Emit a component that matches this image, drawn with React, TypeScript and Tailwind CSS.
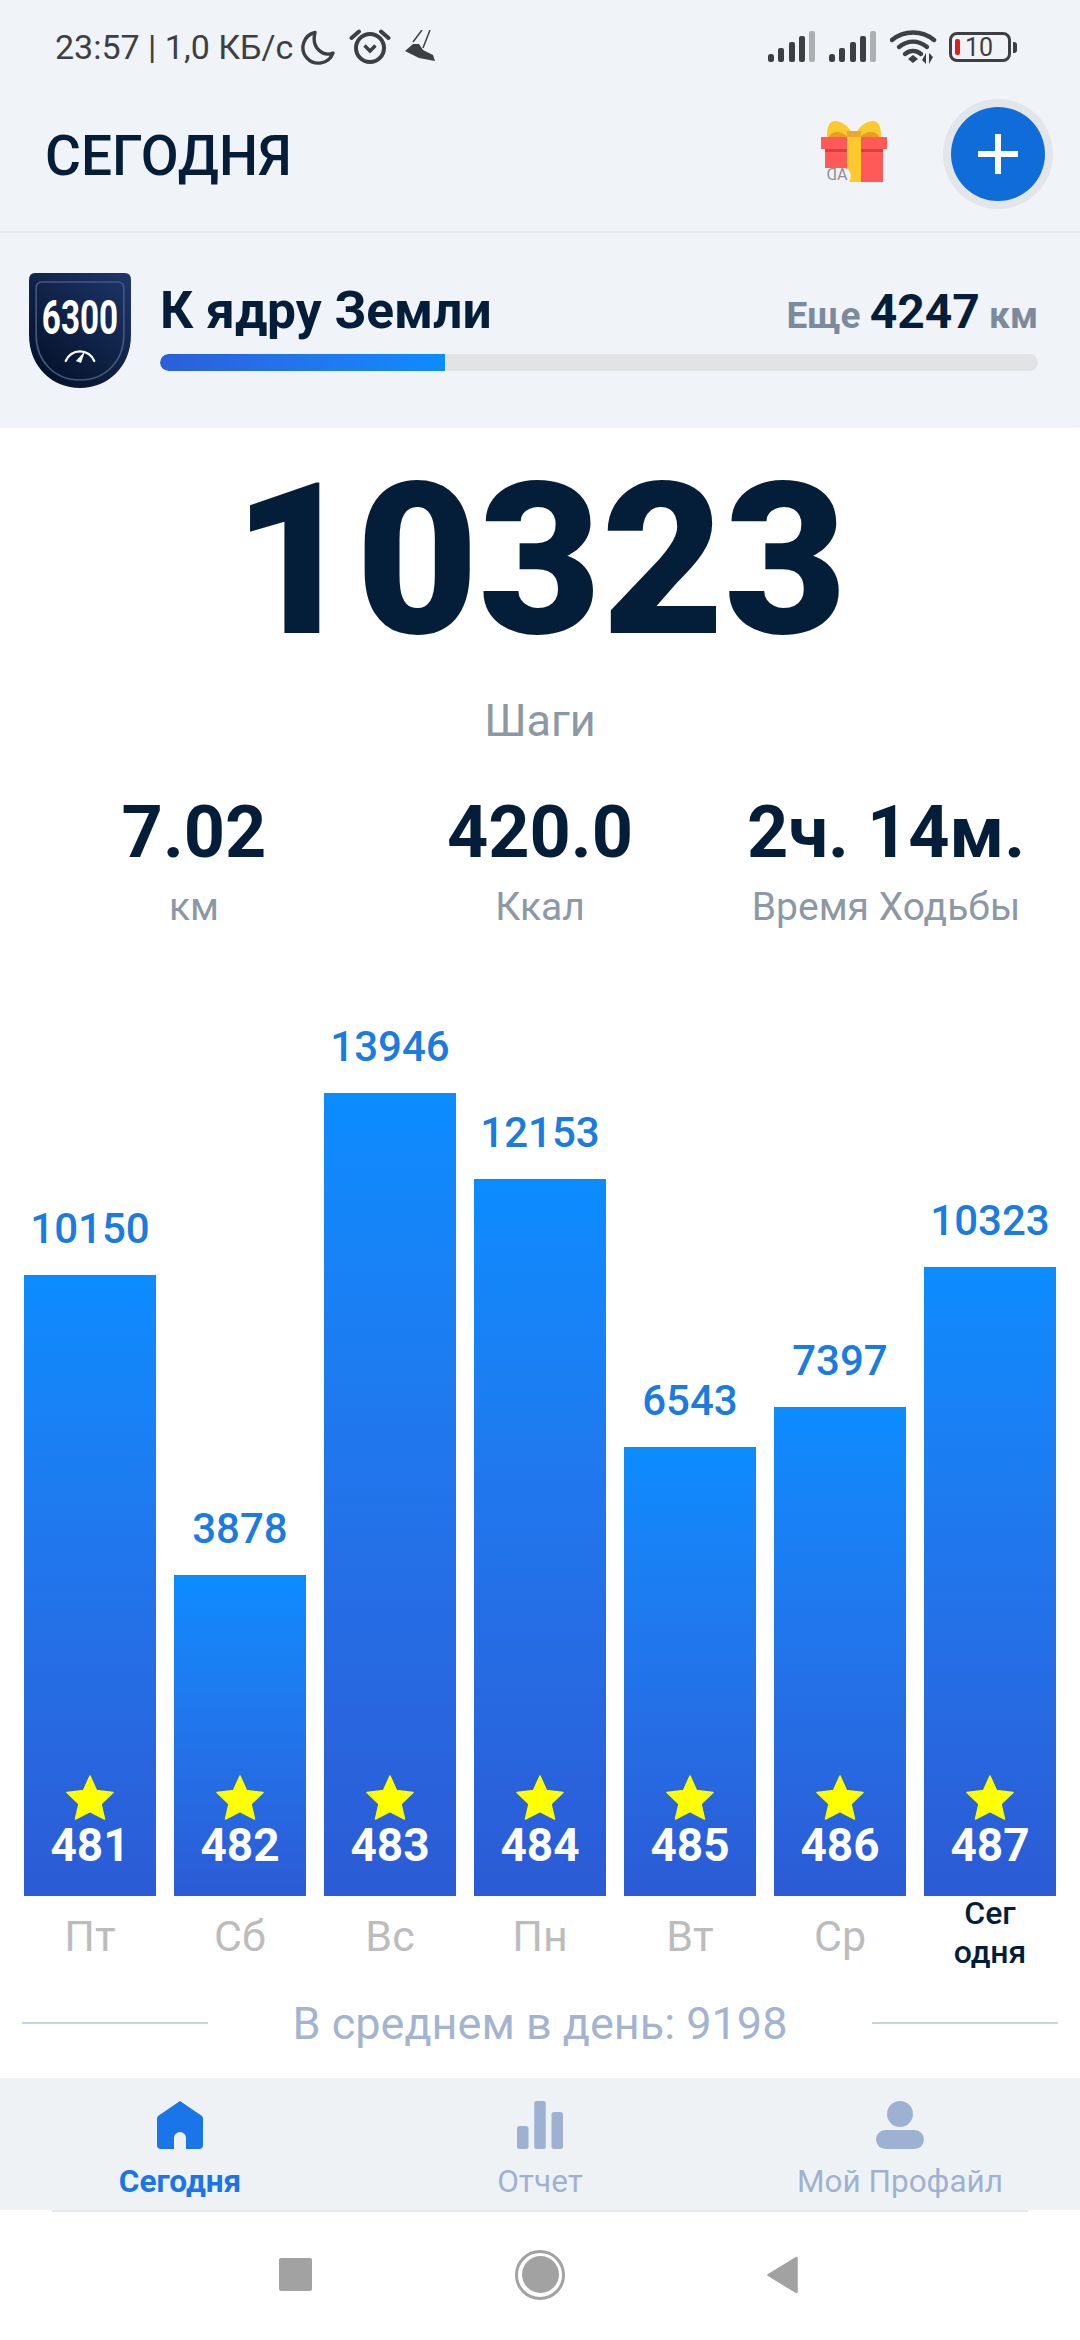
import type { JSX } from "react";

interface DayBar {
  steps: number;
  height: number;
  star: number;
  day: string;
}

const bars: DayBar[] = [
  { steps: 10150, height: 621, star: 481, day: "Пт" },
  { steps: 3878, height: 321, star: 482, day: "Сб" },
  { steps: 13946, height: 803, star: 483, day: "Вс" },
  { steps: 12153, height: 717, star: 484, day: "Пн" },
  { steps: 6543, height: 449, star: 485, day: "Вт" },
  { steps: 7397, height: 489, star: 486, day: "Ср" },
  { steps: 10323, height: 629, star: 487, day: "Сегодня" },
];

function StatusBar(): JSX.Element {
  return (
    <div className="h-[96px] flex items-center justify-between pl-[55px] pr-[63px] pb-[2px]">
      <div className="flex items-center text-[#3d3f42]">
        <span className="text-[34px] leading-none">23:57 | 1,0 КБ/с</span>
        <svg width="36" height="36" viewBox="0 0 36 36" className="ml-[7px]">
          <path d="M15 3.5 A15.5 15.5 0 1 0 33 24 C23 28 11 19 15 3.5Z" fill="none" stroke="#3d3f42" strokeWidth="3.4" strokeLinejoin="round" />
        </svg>
        <svg width="42" height="40" viewBox="0 0 42 40" className="ml-[13px]">
          <circle cx="21" cy="21" r="14" fill="none" stroke="#3d3f42" strokeWidth="4" />
          <path d="M15.5 18.5 L21 24 L26.5 18.5" fill="none" stroke="#3d3f42" strokeWidth="3.4" />
          <path d="M2.5 11 L10 4.5 M39.5 11 L32 4.5" stroke="#3d3f42" strokeWidth="4" strokeLinecap="round" />
        </svg>
        <svg width="32" height="34" viewBox="0 0 32 34" className="ml-[14px]">
          <path d="M0 21 L8 14 L14 14 L18 20 L28 25 L30 31 L14 28Z" fill="#3d3f42" />
          <path d="M8 12 L17 0 M18 18 L25 0" stroke="#3d3f42" strokeWidth="1.5" fill="none" />
        </svg>
      </div>
      <div className="flex items-center">
        <SignalIcon />
        <SignalIcon className="ml-[13px]" />
        <svg width="48" height="36" viewBox="0 0 48 36" className="ml-[13px]">
          <path d="M2 11 C14 1 32 1 44 11" fill="none" stroke="#3d3f42" strokeWidth="4.4" strokeLinecap="round" />
          <path d="M9 18 C18 11 28 11 37 18" fill="none" stroke="#3d3f42" strokeWidth="4.4" strokeLinecap="round" />
          <path d="M15 25 C20 21 26 21 31 25" fill="none" stroke="#3d3f42" strokeWidth="4.4" strokeLinecap="round" />
          <path d="M18 30 L23 26 L28 30 L23 34Z" fill="#3d3f42" />
          <path d="M36 24 L36 35 L32 31Z M39 24 L39 35 L43 28Z" fill="#3d3f42" />
        </svg>
        <div className="ml-[11px] w-[62px] h-[30px] border-[3.5px] border-[#3d3f42] rounded-[8px] flex items-center pl-[3px]">
          <div className="w-[5px] h-[16px] rounded-[2px] bg-[#d9201c]" />
          <span className="ml-[5px] text-[25px] leading-none text-[#3d3f42]">10</span>
        </div>
        <div className="ml-[2px] w-[4px] h-[11px] rounded-r-[3px] bg-[#3d3f42]" />
      </div>
    </div>
  );
}

function SignalIcon({ className = "" }: { className?: string }): JSX.Element {
  return (
    <svg width="48" height="32" viewBox="0 0 48 32" className={className}>
      <rect x="0" y="23" width="6" height="8" rx="2.5" fill="#3d3f42" />
      <rect x="10" y="17" width="6" height="14" rx="2" fill="#3d3f42" />
      <rect x="21" y="11" width="6" height="20" rx="2" fill="#3d3f42" />
      <rect x="31" y="5" width="6" height="26" rx="2" fill="#3d3f42" />
      <rect x="41" y="0" width="6" height="31" rx="2" fill="#adafb1" />
    </svg>
  );
}

function GiftIcon(): JSX.Element {
  return (
    <svg width="68" height="70" viewBox="0 0 68 70">
      <path d="M33 16 C26 2 14 -2 9 3 C6 8 6 12 6 18 L60 18 C60 12 60 8 57 3 C52 -2 40 2 33 16Z" fill="#fdc92f" />
      <path d="M8 17 C10 11 20 10 27 17Z M58 17 C56 11 46 10 39 17Z" fill="#e89b26" />
      <rect x="26" y="11" width="14" height="7" fill="#e8a92f" />
      <rect x="0" y="17" width="66" height="12" fill="#ff5a58" />
      <rect x="4" y="29" width="58" height="33" fill="#ff5a58" />
      <rect x="4" y="29" width="58" height="3" fill="#d93f40" />
      <rect x="26" y="17" width="14" height="45" fill="#fdc92f" />
      <path d="M4 62 L4 48 L22 48 C29 48 32 55 28 62Z" fill="#f0f3f8" />
      <text x="16" y="60" textAnchor="middle" transform="matrix(-1 0 0 1 32 0)" fontFamily="Roboto, sans-serif" fontSize="16" fill="#8e9095">AD</text>
    </svg>
  );
}

function HeaderRow(): JSX.Element {
  return (
    <div className="h-[137px] flex items-center pl-[45px] pr-[27px] pb-[20px] border-b-[2px] border-[#e7e9ed]">
      <h1 className="mt-[6px] text-[55px] font-medium leading-none text-[#041e3a]">СЕГОДНЯ</h1>
      <div className="ml-auto mr-[54px] mt-[2px]">
        <GiftIcon />
      </div>
      <div className="w-[110px] h-[110px] rounded-full bg-[#e3e5e9] flex items-center justify-center">
        <div className="w-[94px] h-[94px] rounded-full bg-[#0f6cd8] flex items-center justify-center">
          <svg width="40" height="40" viewBox="0 0 40 40">
            <path d="M20 0 V40 M0 20 H40" stroke="#fff" strokeWidth="6" />
          </svg>
        </div>
      </div>
    </div>
  );
}

function ShieldBadge(): JSX.Element {
  return (
    <svg width="104" height="116" viewBox="0 0 102 116" preserveAspectRatio="none" className="shrink-0">
      <defs>
        <linearGradient id="shieldFill" x1="0.9" y1="0" x2="0.1" y2="1">
          <stop offset="0" stopColor="#1c3468" />
          <stop offset="1" stopColor="#020f24" />
        </linearGradient>
      </defs>
      <path d="M7 0 H95 Q101 0 101 7 V62 C101 94 78 115 51 115 C24 115 1 94 1 62 V7 Q1 0 7 0Z" fill="url(#shieldFill)" />
      <path d="M14 9 H88 Q94 9 94 15 V62 C94 88 76 107 51 107 C26 107 8 88 8 62 V15 Q8 9 14 9Z" fill="none" stroke="#46577c" strokeWidth="1.6" />
      <text transform="translate(51 61) scale(0.68 1)" textAnchor="middle" fontFamily="Roboto, sans-serif" fontWeight="700" fontSize="48" fill="#fff">6300</text>
      <path d="M37 88 A15 15 0 0 1 65 88" fill="none" stroke="#fff" strokeWidth="2.2" strokeLinecap="round" />
      <path d="M47 88 L56 78 L52 90Z" fill="#fff" />
    </svg>
  );
}

function GoalBanner(): JSX.Element {
  return (
    <div className="h-[195px] flex items-start pl-[28px] pr-[42px] pt-[40px] text-[#041e3a]">
      <ShieldBadge />
      <div className="ml-[28px] flex-1 pt-[8px]">
        <div className="flex items-baseline justify-between h-[59px]">
          <span className="text-[51.5px] font-bold leading-[59px]">К ядру Земли</span>
          <span className="text-[37px] font-bold leading-[59px] text-[#7b8a9c]">
            Еще <span className="text-[48px] text-[#041e3a]">4247</span> км
          </span>
        </div>
        <div className="mt-[14px] h-[17px] rounded-full bg-[#e1e3e5] overflow-hidden">
          <div className="h-full w-[285px] rounded-l-full bg-gradient-to-r from-[#2b5fd9] to-[#0a8cff]" />
        </div>
      </div>
    </div>
  );
}

function Stat({ value, label }: { value: string; label: string }): JSX.Element {
  return (
    <div className="flex flex-col items-center w-[346px]">
      <span className="text-[72px] font-bold leading-[80px] text-[#041e3a] whitespace-nowrap">{value}</span>
      <span className="mt-[13px] text-[39px] leading-[42px] text-[#8b98a6] whitespace-nowrap">{label}</span>
    </div>
  );
}

function ChartColumn({ bar }: { bar: DayBar }): JSX.Element {
  return (
    <div className="w-[132px] flex flex-col items-center">
      <span className="text-[42px] font-medium leading-[48px] mb-[22px] text-[#1a7be0]">{bar.steps}</span>
      <div
        className="w-full flex flex-col items-center justify-end pb-[29px] bg-gradient-to-b from-[#0a8cff] to-[#2b5bd5]"
        style={{ height: bar.height }}
      >
        <svg width="48" height="45" viewBox="0 0 48 45">
          <path
            d="M24 1 L30.5 15.5 L47 17.5 L35 29 L38.5 44 L24 36.5 L9.5 44 L13 29 L1 17.5 L17.5 15.5Z"
            fill="#ffff00"
            stroke="#ffff00"
            strokeWidth="1.5"
            strokeLinejoin="round"
          />
        </svg>
        <span className="mt-[3px] text-[46px] font-bold leading-[44px] text-white">{bar.star}</span>
      </div>
    </div>
  );
}

function DayLabel({ day }: { day: string }): JSX.Element {
  if (day === "Сегодня") {
    return (
      <div className="w-[132px] -mt-[2px] text-center text-[32px] font-medium leading-[39px] text-[#041e3a]">
        <div>Сег</div>
        <div>одня</div>
      </div>
    );
  }
  return (
    <div className="w-[132px] h-[80px] pt-[18px] text-center text-[43px] leading-[44px] text-[#bcbcbc]">{day}</div>
  );
}

function NavItem({
  icon,
  label,
  active,
}: {
  icon: JSX.Element;
  label: string;
  active?: boolean;
}): JSX.Element {
  return (
    <div className="w-[360px] flex flex-col items-center pt-[23px]">
      <div className="h-[48px] flex items-end">{icon}</div>
      <span
        className={
          active
            ? "mt-[14px] text-[31.5px] font-bold leading-[38px] text-[#1a76e8]"
            : "mt-[14px] text-[31.5px] leading-[38px] text-[#9db2d3]"
        }
      >
        {label}
      </span>
    </div>
  );
}

export default function App(): JSX.Element {
  return (
    <div className="w-[1080px] h-[2340px] overflow-hidden flex flex-col bg-white font-['Roboto',sans-serif]">
      <div className="bg-[#f0f3f8]">
        <StatusBar />
        <HeaderRow />
        <GoalBanner />
      </div>

      <main className="flex-1 flex flex-col">
        <div className="h-[266px] flex items-center justify-center text-[212px] font-black leading-none text-[#041e3a]">
          10323
        </div>
        <div className="mt-[2px] text-center text-[45px] leading-[50px] text-[#8b98a6]">Шаги</div>
        <div className="mt-[47px] flex justify-center">
          <Stat value="7.02" label="км" />
          <Stat value="420.0" label="Ккал" />
          <Stat value="2ч. 14м." label="Время Ходьбы" />
        </div>

        <div className="mt-[auto] px-[24px]">
          <div className="flex items-end gap-[18px]">
            {bars.map((bar: DayBar) => (
              <ChartColumn key={bar.star} bar={bar} />
            ))}
          </div>
          <div className="flex gap-[18px]">
            {bars.map((bar: DayBar) => (
              <DayLabel key={bar.star} day={bar.day} />
            ))}
          </div>
        </div>

        <div className="h-[102px] flex items-center px-[22px] pt-[17px] pb-[25px]">
          <div className="w-[186px] h-[2px] bg-[#c8d3e4]" />
          <span className="flex-1 text-center text-[45px] leading-none text-[#a3b4d1]">В среднем в день: 9198</span>
          <div className="w-[186px] h-[2px] bg-[#c8d3e4]" />
        </div>
      </main>

      <nav className="h-[132px] flex bg-[#eff2f5]">
        <NavItem
          active
          label="Сегодня"
          icon={
            <svg width="46" height="48" viewBox="0 0 46 48">
              <path d="M23 0 L45 15 Q46 16 46 18 V44 Q46 48 42 48 H29 V37 A6 6 0 0 0 17 37 V48 H4 Q0 48 0 44 V18 Q0 16 1 15Z" fill="#1a76e8" />
            </svg>
          }
        />
        <NavItem
          label="Отчет"
          icon={
            <svg width="46" height="48" viewBox="0 0 46 48">
              <rect x="0" y="25" width="11.5" height="23" rx="2.5" fill="#9db2d3" />
              <rect x="17.25" y="0" width="11.5" height="48" rx="2.5" fill="#9db2d3" />
              <rect x="34.5" y="11" width="11.5" height="37" rx="2.5" fill="#9db2d3" />
            </svg>
          }
        />
        <NavItem
          label="Мой Профайл"
          icon={
            <svg width="48" height="48" viewBox="0 0 48 48">
              <circle cx="24" cy="13" r="13" fill="#9db2d3" />
              <rect x="0" y="29" width="48" height="19" rx="9.5" fill="#9db2d3" />
            </svg>
          }
        />
      </nav>

      <div className="h-[130px] relative flex items-center justify-center pb-[1px]">
        <div className="absolute top-0 left-[52px] w-[976px] h-[2px] bg-[#e6e8ea]" />
        <div className="w-[245px] flex justify-center">
          <div className="w-[33px] h-[33px] rounded-[2px] bg-[#a2a2a2]" />
        </div>
        <div className="w-[245px] flex justify-center">
          <div className="w-[50px] h-[50px] rounded-full border-[3px] border-[#a2a2a2] flex items-center justify-center">
            <div className="w-[37px] h-[37px] rounded-full bg-[#a2a2a2]" />
          </div>
        </div>
        <div className="w-[245px] flex justify-center pr-[6px]">
          <svg width="33" height="38" viewBox="0 0 32 38">
            <path d="M30 2 V36 L2 19Z" fill="#a2a2a2" stroke="#a2a2a2" strokeWidth="2.5" strokeLinejoin="round" />
          </svg>
        </div>
      </div>
    </div>
  );
}
